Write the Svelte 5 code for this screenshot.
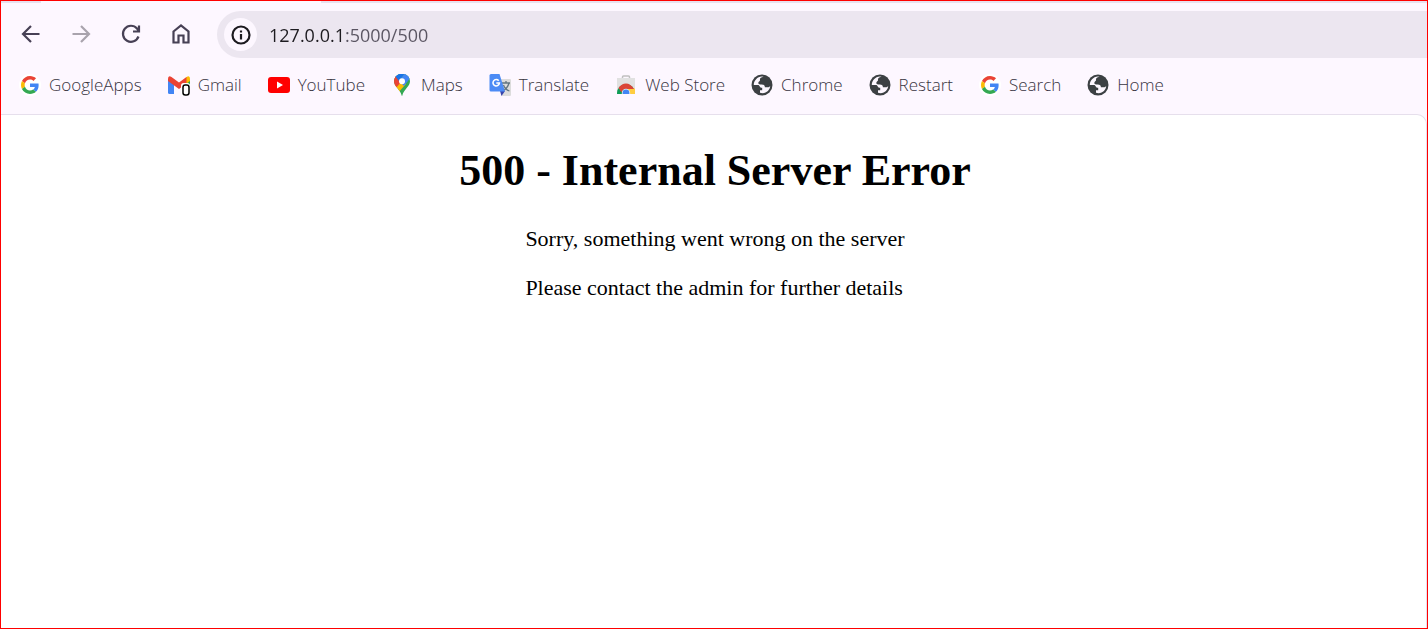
<script>
  const address = '127.0.0.1:5000/500';
  const bookmarks = [
    { label: 'GoogleApps', icon: 'google' },
    { label: 'Gmail', icon: 'gmail' },
    { label: 'YouTube', icon: 'youtube' },
    { label: 'Maps', icon: 'maps' },
    { label: 'Translate', icon: 'translate' },
    { label: 'Web Store', icon: 'store' },
    { label: 'Chrome', icon: 'globe' },
    { label: 'Restart', icon: 'globe' },
    { label: 'Search', icon: 'google' },
    { label: 'Home', icon: 'globe' }
  ];
</script>

{#snippet favicon(name)}
  {#if name === 'google'}
    <svg class="fav" viewBox="0 0 22 22" aria-hidden="true">
      <circle cx="11" cy="11" r="11" fill="#fff" />
      <g transform="translate(2 2) scale(.375)">
        <path fill="#EA4335" d="M24 9.5c3.54 0 6.71 1.22 9.21 3.6l6.85-6.85C35.9 2.38 30.47 0 24 0 14.62 0 6.51 5.38 2.56 13.22l7.98 6.19C12.43 13.72 17.74 9.5 24 9.5z" />
        <path fill="#4285F4" d="M46.98 24.55c0-1.57-.15-3.09-.38-4.55H24v9.02h12.94c-.58 2.96-2.26 5.48-4.78 7.18l7.73 6c4.51-4.18 7.09-10.36 7.09-17.65z" />
        <path fill="#FBBC05" d="M10.53 28.59A14.5 14.5 0 0 1 9.77 24c0-1.6.27-3.14.76-4.59l-7.98-6.19A24 24 0 0 0 0 24c0 3.88.92 7.54 2.56 10.78z" />
        <path fill="#34A853" d="M24 48c6.48 0 11.93-2.13 15.89-5.81l-7.73-6c-2.15 1.45-4.92 2.3-8.16 2.3-6.26 0-11.57-4.22-13.47-9.91l-7.98 6.19C6.51 42.62 14.62 48 24 48z" />
      </g>
    </svg>
  {:else if name === 'gmail'}
    <svg class="fav" viewBox="0 0 22 22" aria-hidden="true">
      <path fill="#4285F4" d="M0 5l6 4v11H1.500Q0 20 0 18.500z" />
      <path fill="#34A853" d="M17 9l5-4v7h-5z" />
      <path fill="#FBBC04" d="M16.500 5l2-2Q22 1 22 5v2l-5.500 4z" />
      <path fill="#EA4335" d="M0 5Q0 1 3.500 3L11 8.500 18.500 3v6L11 15 0 7z" />
      <rect x="13" y="9" width="9" height="13" rx="2.500" fill="#fff" />
      <rect x="15" y="11" width="6" height="10" rx="2.200" fill="#fff" stroke="#000" stroke-width="1.500" />
    </svg>
  {:else if name === 'youtube'}
    <svg class="fav" viewBox="0 0 22 22" aria-hidden="true">
      <rect y="3" width="22" height="16" rx="3" fill="#f00" />
      <path fill="#fff" d="M9 7.500l6 3.500-6 3.500z" />
    </svg>
  {:else if name === 'maps'}
    <svg class="fav" viewBox="0 0 22 22" aria-hidden="true">
      <clipPath id="pin"><path d="M11-.5C6.500-.5 3 3 3 7.300c0 5.500 6 7.200 8 15.200 2-8 8-9.700 8-15.200C19 3 15.500-.5 11-.5z" /></clipPath>
      <g clip-path="url(#pin)">
        <path fill="#34A853" d="M0-1h22v24H0z" />
        <path fill="#FBBC04" d="M0 14L9 4l6 6L5 21z" />
        <path fill="#EA4335" d="M0 0l5 2 6 5-7 8-4-2z" />
        <path fill="#1A73E8" d="M4 2l4-3h6l-6 8z" />
        <path fill="#4285F4" d="M8 7l6-8 6 4-7 9z" />
      </g>
      <circle cx="11" cy="7.300" r="3" fill="#fff" />
    </svg>
  {:else if name === 'translate'}
    <svg class="fav" viewBox="0 0 22 22" aria-hidden="true">
      <path fill="#dcdcdc" d="M9 5h12q1 0 1 1v15q0 1-1 1h-8z" />
      <path fill="none" stroke="#617580" stroke-width="1.300" d="M13 9h8M17 7v2M20 9c-1 4-3 6-6 8M14.500 11c1 3 3 5 6 6" />
      <path fill="#3744aa" d="M11 17h5l-3.500 5z" />
      <path fill="#4c8bf5" d="M2 0h8.500L16 17.500H2q-1.500 0-1.500-1.500V1.500Q.5 0 2 0z" />
      <path fill="none" stroke="#fff" stroke-width="1.600" d="M9.700 6.700A3.200 3.200 0 1 0 10.400 9H7.300" />
    </svg>
  {:else if name === 'store'}
    <svg class="fav" viewBox="0 0 22 22" aria-hidden="true">
      <path fill="none" stroke="#c0c0c0" stroke-width="1.500" d="M7.500 5V3Q7.500 2 8.500 2h5q1 0 1 1v2" />
      <path fill="#e1e1e1" d="M2 4h18v15q0 1-1 1H3q-1 0-1-1z" />
      <clipPath id="bag"><path d="M2 4h18v16H2z" /></clipPath>
      <g clip-path="url(#bag)">
        <circle cx="11" cy="19" r="9" fill="#0f9d58" />
        <path fill="#ffcd40" d="M11 14.500h9v6h-9z" />
        <path fill="#db4437" d="M3.500 14Q6.500 9.500 11 9.500t8 5.500H11q-3.500 0-4.500 3.500z" />
        <circle cx="11" cy="19" r="4.200" fill="#f1f1f1" />
        <circle cx="11" cy="19" r="3.400" fill="#4285f4" />
      </g>
    </svg>
  {:else}
    <svg class="fav" viewBox="0 0 22 22" aria-hidden="true">
      <circle cx="11" cy="11" r="10.500" fill="#3c4043" />
      <path fill="#fdf7ff" d="M12.600 2.800c-3 .5-3.900 1.800-3.600 3.300.3 1.200-1.700 1.300-1.700 2.900 0 1.500 1.500 1.500 3.400 1.500 2.300 0 3.200 1.100 3.200 2.700h3.600c.8 0 1.100-.6 1.700-1.100-.3 3.700-3.200 7-7.700 7.100-1 0-1.700-.2-2.500-.4v-2.500h2.200v-2.600c-2.600.4-2.200-2.800-4.300-2.800H2.800C2.600 7 6.500 2.300 11 2.500z" />
    </svg>
  {/if}
{/snippet}

<div class="window">
  <header>
    <div class="strip"><div class="tab"></div></div>
    <nav class="toolbar" aria-label="Navigation">
      <button aria-label="Back">
        <svg viewBox="0 0 24 24"><path d="M20.500 12H4.500M12 4l-8 8 8 8" /></svg>
      </button>
      <button aria-label="Forward" disabled>
        <svg viewBox="0 0 24 24"><path d="M3.500 12h16M12 4l8 8-8 8" /></svg>
      </button>
      <button aria-label="Reload">
        <svg viewBox="0 0 24 24"><path d="M19.500 14.500a8 8 0 1 1-1.500-8l2 2.500M20 3.500v6h-6" /></svg>
      </button>
      <button aria-label="Home page">
        <svg viewBox="0 0 24 24"><path d="M4.500 9.500L12 3.500l7.500 6v11h-5v-7h-5v7h-5z" /></svg>
      </button>
      <div class="omnibox">
        <button class="info" aria-label="Site information">
          <svg viewBox="0 0 24 24"><circle cx="12" cy="12" r="8.500" /><path d="M12 11v5.500M12 7.500v2" /></svg>
        </button>
        <input type="text" aria-label="Address" value={address} spellcheck="false" />
      </div>
    </nav>
    <nav class="bookmarks" aria-label="Bookmarks">
      {#each bookmarks as { label, icon }}
        <a href="#top">{@render favicon(icon)}<span>{label}</span></a>
      {/each}
    </nav>
  </header>
  <main>
    <h1>500 - Internal Server Error</h1>
    <div class="message">
      <p>Sorry, something went wrong on the server</p>
      <p>Please contact the admin for further details</p>
    </div>
  </main>
</div>

<style>
  .window {
    box-sizing: border-box;
    min-height: 100vh;
    display: flex;
    flex-direction: column;
    border: 1px solid #f00;
    background: #fdf7ff;
    overflow: hidden;
  }
  header {
    font-family: "Open Sans", "Noto Sans", sans-serif;
  }
  .strip {
    height: 2px;
    background: #e8e0ee;
  }
  .tab {
    width: 280px;
    height: 2px;
    margin-left: 40px;
    background: #fdf7ff;
  }
  .toolbar {
    display: flex;
    align-items: flex-start;
    padding: 8px 0 0 5px;
  }
  button {
    display: grid;
    place-items: center;
    width: 50px;
    height: 46px;
    padding: 0;
    border: 0;
    background: none;
    color: #474055;
  }
  button:disabled {
    color: #a9a3ad;
  }
  button svg {
    width: 24px;
    height: 24px;
    fill: none;
    stroke: currentColor;
    stroke-width: 2.2;
  }
  .omnibox {
    flex: 1;
    display: flex;
    align-items: center;
    gap: 12px;
    height: 47px;
    margin-left: 11px;
    padding-left: 7px;
    border-radius: 24px 0 0 24px;
    background: #ece6f0;
  }
  .info {
    width: 33px;
    height: 33px;
    border-radius: 50%;
    background: #fdf7ff;
    color: #1d1b20;
  }
  input {
    flex: 1;
    min-width: 0;
    padding: 0;
    border: 0;
    outline: 0;
    font: 18px/24px "Open Sans", "Noto Sans", sans-serif;
    color: transparent;
    background: linear-gradient(90deg, #1d1b20 76px, #5a5562 76px);
    background-clip: text;
  }
  .bookmarks {
    display: flex;
    align-items: center;
    gap: 26px;
    height: 54px;
    padding: 0 0 2px 18px;
  }
  a {
    display: flex;
    align-items: center;
    gap: 8px;
    color: #38343f;
    font-size: 17px;
    font-weight: 300;
    line-height: 24px;
    text-decoration: none;
    white-space: nowrap;
  }
  .fav {
    width: 22px;
    height: 22px;
    flex: none;
  }
  main {
    flex: 1;
    padding: 30px 0 0 3px;
    border-top: 1px solid #e6dfec;
    border-right: 1px solid #e6dfec;
    border-top-right-radius: 10px;
    background: #fff;
    color: #000;
    font-family: "Liberation Serif", "Times New Roman", serif;
    font-size: 22px;
    line-height: 27px;
  }
  h1 {
    margin: 0 0 28px;
    font-size: 44px;
    line-height: 52px;
    text-align: center;
  }
  .message {
    width: fit-content;
    margin: 0 auto;
  }
  p {
    margin: 0 0 22px;
  }
</style>
